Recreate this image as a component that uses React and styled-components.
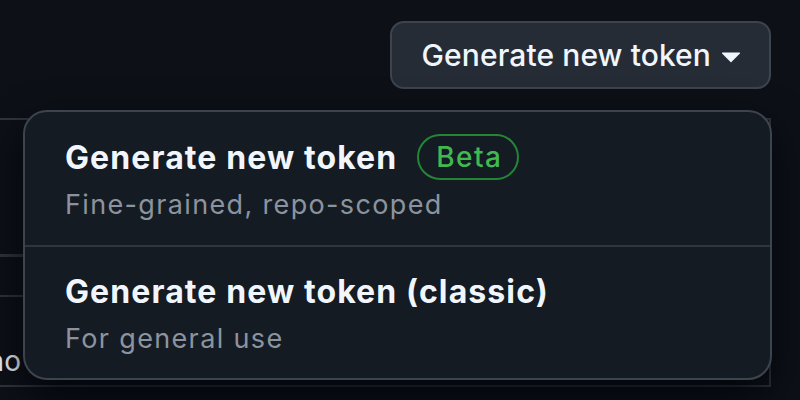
import React from 'react'
import styled, { createGlobalStyle } from 'styled-components'

const GlobalStyle = createGlobalStyle`
  html, body {
    margin: 0;
    padding: 0;
    background: #0d1117;
    overflow: hidden;
  }
  body {
    font-family: Inter, "Noto Sans", "Liberation Sans", sans-serif;
    -webkit-font-smoothing: antialiased;
  }
  * {
    box-sizing: border-box;
  }
`

const items = [
  { title: 'Generate new token', desc: 'Fine-grained, repo-scoped', beta: true },
  { title: 'Generate new token (classic)', desc: 'For general use' }
]

export default function App() {
  return (
    <Page>
      <GlobalStyle />
      <Toolbar>
        <MenuButton>
          Generate new token
          <Caret viewBox="0 0 16 16" aria-hidden="true">
            <path d="m4.427 7.427 3.396 3.396a.25.25 0 0 0 .354 0l3.396-3.396A.25.25 0 0 0 11.396 7H4.604a.25.25 0 0 0-.177.427Z" />
          </Caret>
        </MenuButton>
      </Toolbar>
      <Backdrop>
        <BackRow height={137} thick />
        <BackRow height={40} />
        <BackRow height={90}>
          <BackText>Who can see</BackText>
        </BackRow>
      </Backdrop>
      <Menu>
        {items.map((item, i) => (
          <MenuItem key={i} divided={i > 0}>
            <ItemTitle>
              {item.title}
              {item.beta && <Badge>Beta</Badge>}
            </ItemTitle>
            <ItemDesc>{item.desc}</ItemDesc>
          </MenuItem>
        ))}
      </Menu>
    </Page>
  )
}

const Page = styled.div`
  position: relative;
  width: 800px;
  height: 400px;
  overflow: hidden;
`
const Toolbar = styled.div`
  display: flex;
  justify-content: flex-end;
  padding: 21px 29px 0 0;
`
const MenuButton = styled.button`
  display: flex;
  align-items: center;
  height: 68px;
  padding: 0 18px 0 30px;
  background: #262c36;
  border: 2px solid #3d444d;
  border-radius: 14px;
  color: #f0f6fc;
  font-family: inherit;
  font-size: 30px;
  font-weight: 500;
  letter-spacing: 0.1px;
`
const Caret = styled.svg`
  width: 40px;
  height: 40px;
  fill: #f0f6fc;
`
const Backdrop = styled.div`
  margin: 29px 29px 0 -40px;
  border-top: 2px solid #30363d;
  border-right: 2px solid #30363d;
`
const BackRow = styled.div`
  height: ${p => p.height}px;
  border-bottom: ${p => (p.thick ? 3 : 2)}px solid #30363d;
  display: flex;
  align-items: center;
`
const BackText = styled.span`
  color: #f0f6fc;
  font-size: 28px;
  padding: 40px 0 0 0;
`
const Menu = styled.div`
  position: absolute;
  top: 110px;
  left: 23px;
  width: 749px;
  background: #151b23;
  border: 2px solid #3d444d;
  border-radius: 24px;
  box-shadow: 0 16px 40px rgba(1, 4, 9, 0.85);
  overflow: hidden;
`
const MenuItem = styled.div`
  display: flex;
  flex-direction: column;
  gap: 6px;
  padding: ${p => (p.divided ? '19px 40px 22px' : '20px 40px 23px')};
  border-top: ${p => (p.divided ? '2px solid #30363d' : 'none')};
`
const ItemTitle = styled.div`
  display: flex;
  align-items: center;
  gap: 20px;
  height: 50px;
  color: #f0f6fc;
  font-size: 32px;
  font-weight: 700;
  letter-spacing: 1.1px;
`
const Badge = styled.span`
  display: inline-flex;
  align-items: center;
  height: 46px;
  padding: 0 15px 0 17px;
  border: 2px solid #238636;
  border-radius: 24px;
  color: #3fb950;
  font-size: 28px;
  font-weight: 500;
  letter-spacing: 1.4px;
`
const ItemDesc = styled.div`
  color: #8b949e;
  font-size: 27px;
  line-height: 34px;
  letter-spacing: 1.35px;
`
